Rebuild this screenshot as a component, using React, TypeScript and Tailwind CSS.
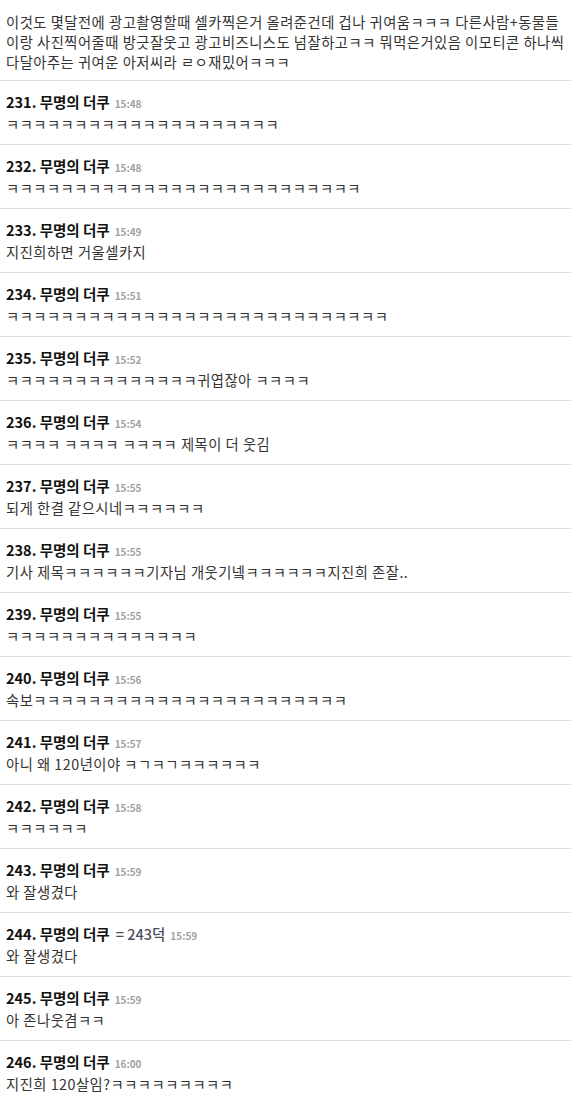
import React from "react";

type Entry = { n: number; time: string; body: string; extra?: string };

const entries: Entry[] = [
  { n: 231, time: "15:48", body: "ㅋㅋㅋㅋㅋㅋㅋㅋㅋㅋㅋㅋㅋㅋㅋㅋㅋㅋㅋㅋ" },
  { n: 232, time: "15:48", body: "ㅋㅋㅋㅋㅋㅋㅋㅋㅋㅋㅋㅋㅋㅋㅋㅋㅋㅋㅋㅋㅋㅋㅋㅋㅋㅋ" },
  { n: 233, time: "15:49", body: "지진희하면 거울셀카지" },
  { n: 234, time: "15:51", body: "ㅋㅋㅋㅋㅋㅋㅋㅋㅋㅋㅋㅋㅋㅋㅋㅋㅋㅋㅋㅋㅋㅋㅋㅋㅋㅋㅋㅋ" },
  { n: 235, time: "15:52", body: "ㅋㅋㅋㅋㅋㅋㅋㅋㅋㅋㅋㅋㅋㅋ귀엽잖아 ㅋㅋㅋㅋ" },
  { n: 236, time: "15:54", body: "ㅋㅋㅋㅋ ㅋㅋㅋㅋ ㅋㅋㅋㅋ 제목이 더 웃김" },
  { n: 237, time: "15:55", body: "되게 한결 같으시네ㅋㅋㅋㅋㅋㅋ" },
  { n: 238, time: "15:55", body: "기사 제목ㅋㅋㅋㅋㅋㅋ기자님 개웃기넼ㅋㅋㅋㅋㅋㅋ지진희 존잘.." },
  { n: 239, time: "15:55", body: "ㅋㅋㅋㅋㅋㅋㅋㅋㅋㅋㅋㅋㅋㅋ" },
  { n: 240, time: "15:56", body: "속보ㅋㅋㅋㅋㅋㅋㅋㅋㅋㅋㅋㅋㅋㅋㅋㅋㅋㅋㅋㅋㅋㅋㅋ" },
  { n: 241, time: "15:57", body: "아니 왜 120년이야 ㅋㄱㅋㄱㅋㅋㅋㅋㅋㅋ" },
  { n: 242, time: "15:58", body: "ㅋㅋㅋㅋㅋㅋ" },
  { n: 243, time: "15:59", body: "와 잘생겼다" },
  { n: 244, time: "15:59", body: "와 잘생겼다", extra: "= 243덕" },
  { n: 245, time: "15:59", body: "아 존나웃겸ㅋㅋ" },
  { n: 246, time: "16:00", body: "지진희 120살임?ㅋㅋㅋㅋㅋㅋㅋㅋㅋ" },
];

export default function App() {
  return (
    <div
      className="w-[571px] bg-white text-[#333] overflow-hidden"
      style={{ fontFamily: '"Noto Sans CJK KR", "Noto Sans", sans-serif' }}
    >
      <div className="px-[6px] pt-[12px] pb-[8px] text-[14.3px] tracking-[0.5px] leading-[20px] whitespace-nowrap">
        <div className="h-[20px]">이것도 몇달전에 광고촬영할때 셀카찍은거 올려준건데 겁나 귀여움ㅋㅋㅋ 다른사람+동물들</div>
        <div className="h-[20px]">이랑 사진찍어줄때 방긋잘웃고 광고비즈니스도 넘잘하고ㅋㅋ 뭐먹은거있음 이모티콘 하나씩</div>
        <div className="h-[20px]">다달아주는 귀여운 아저씨라 ㄹㅇ재밌어ㅋㅋㅋ</div>
      </div>
      {entries.map((e) => (
        <div key={e.n} className="border-t border-[#dddddd] px-[6px] pt-[11px] pb-[10px]">
          <div className="flex h-[20px] items-baseline whitespace-nowrap leading-[20px]">
            <span className="text-[14.5px] font-bold text-[#111]">
              {e.n}. 무명의 더쿠
            </span>
            {e.extra && (
              <span className="ml-[6px] text-[14.5px] font-medium text-[#4a4f5c]">{e.extra}</span>
            )}
            <span className="ml-[5px] text-[10px] font-bold text-[#a0a0a0]">{e.time}</span>
          </div>
          <div className="mt-[2px] h-[20px] text-[14.3px] tracking-[0.5px] leading-[20px] whitespace-nowrap">
            {e.body}
          </div>
        </div>
      ))}
    </div>
  );
}
